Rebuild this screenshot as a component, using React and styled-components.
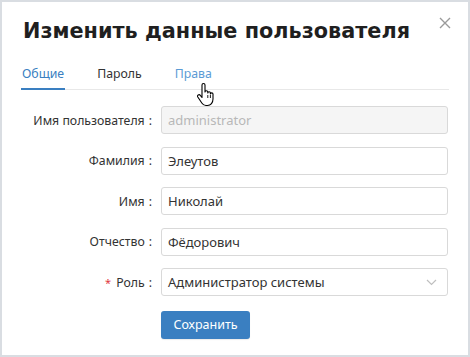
import React from "react";
import styled, { createGlobalStyle } from "styled-components";

const Global = createGlobalStyle`
  html, body { margin: 0; padding: 0; background: #ffffff; }
  body { font-family: "Noto Sans", "DejaVu Sans", sans-serif; }
  * { box-sizing: border-box; }
`;

const Frame = styled.div`
  position: relative;
  width: 470px;
  height: 357px;
  border: 2px solid #d9dde2;
  background: #fff;
  padding: 13px 19px 0 19px;
  overflow: hidden;
`;

const Title = styled.h1`
  margin: 0;
  padding-left: 2px;
  font-family: "DejaVu Sans", Verdana, sans-serif;
  font-weight: bold;
  font-size: 20.8px;
  line-height: 32px;
  color: #1f1f1f;
`;

const Close = styled.button`
  position: absolute;
  top: 12px;
  right: 14px;
  width: 18px;
  height: 18px;
  padding: 0;
  border: 0;
  background: transparent;
  display: flex;
  align-items: center;
  justify-content: center;
`;

const TabList = styled.div`
  display: flex;
  gap: 31px;
  margin-top: 18px;
  border-bottom: 1px solid #e8e8e8;
`;

const Tab = styled.div`
  font-size: 12.3px;
  line-height: 18px;
  padding: 0 1px 5px 1px;
  margin-bottom: -1px;
  color: ${(p) => (p.$active ? "#3a7fc1" : p.$hover ? "#5b9bd5" : "#333")};
  border-bottom: 2px solid ${(p) => (p.$active ? "#3a7fc1" : "transparent")};
`;

const Form = styled.div`
  display: flex;
  flex-direction: column;
  gap: 12.5px;
  margin-top: 16px;
`;

const Row = styled.div`
  display: grid;
  grid-template-columns: 140px 287px;
  align-items: center;
`;

const Label = styled.label`
  display: flex;
  justify-content: flex-end;
  align-items: center;
  padding-right: 9px;
  font-size: 12.3px;
  color: #333;
  white-space: nowrap;
`;

const Colon = styled.span`
  margin-left: 4px;
  color: #333;
`;

const Star = styled.span`
  color: #e0393e;
  margin-right: 5px;
  font-size: 11px;
`;

const Input = styled.div`
  height: 28px;
  border: 1px solid #d9d9d9;
  border-radius: 3px;
  background: ${(p) => (p.$disabled ? "#f5f5f5" : "#fff")};
  color: ${(p) => (p.$disabled ? "#b8b8b8" : "#333")};
  font-size: 13px;
  display: flex;
  align-items: center;
  justify-content: space-between;
  padding: 0 10px 0 6px;
`;

const ButtonRow = styled.div`
  padding-left: 140px;
  margin-top: 2px;
`;

const Button = styled.button`
  width: 89px;
  height: 28px;
  border: 0;
  border-radius: 3px;
  background: #3a7fc1;
  color: #fff;
  font-family: "Noto Sans", "DejaVu Sans", sans-serif;
  font-size: 12.5px;
  box-shadow: 0 1px 1px rgba(0,0,0,0.08);
`;

const Cursor = styled.svg`
  position: absolute;
  left: 194px;
  top: 80px;
`;

const fields = [
  { label: "Имя пользователя", value: "administrator", disabled: true },
  { label: "Фамилия", value: "Элеутов" },
  { label: "Имя", value: "Николай" },
  { label: "Отчество", value: "Фёдорович" },
  { label: "Роль", value: "Администратор системы", required: true, select: true },
];

export default function App() {
  return (
    <>
      <Global />
      <Frame>
        <Title>Изменить данные пользователя</Title>
        <Close aria-label="close">
          <svg width="12" height="12" viewBox="0 0 12 12">
            <path d="M1 1 L11 11 M11 1 L1 11" stroke="#9a9a9a" strokeWidth="1.4" fill="none" />
          </svg>
        </Close>
        <TabList>
          <Tab $active>Общие</Tab>
          <Tab>Пароль</Tab>
          <Tab $hover>Права</Tab>
        </TabList>
        <Form>
          {fields.map((f) => (
            <Row key={f.label}>
              <Label>
                {f.required && <Star>*</Star>}
                {f.label}
                <Colon>:</Colon>
              </Label>
              <Input $disabled={f.disabled}>
                <span>{f.value}</span>
                {f.select && (
                  <svg width="11" height="7" viewBox="0 0 11 7">
                    <path d="M1 1 L5.5 5.5 L10 1" stroke="#bfbfbf" strokeWidth="1.2" fill="none" />
                  </svg>
                )}
              </Input>
            </Row>
          ))}
          <ButtonRow>
            <Button>Сохранить</Button>
          </ButtonRow>
        </Form>
        <Cursor width="20" height="25" viewBox="0 0 20 25">
          <path
            d="M7.5 1.5 c0.8 0 1.5 0.6 1.5 1.4 V10 c0-0.8 0.6-1.3 1.4-1.3 s1.4 0.5 1.4 1.3 V11 c0-0.7 0.6-1.2 1.3-1.2 s1.3 0.5 1.3 1.2 V12 c0-0.7 0.6-1.1 1.3-1.1 s1.3 0.5 1.3 1.1 V17 c0 3.5-2.2 6.5-5.5 6.5 H10 c-2 0-3.2-1-4.2-2.5 L1.8 15 c-0.5-0.8-0.3-1.7 0.4-2.1 s1.6-0.2 2.1 0.5 L6 15.5 V2.9 c0-0.8 0.7-1.4 1.5-1.4z"
            fill="#fff"
            stroke="#000"
            strokeWidth="1.1"
            strokeLinejoin="round"
          />
          <path d="M11.8 13 V16 M14.4 13 V16" stroke="#000" strokeWidth="0.9" />
        </Cursor>
      </Frame>
    </>
  );
}
